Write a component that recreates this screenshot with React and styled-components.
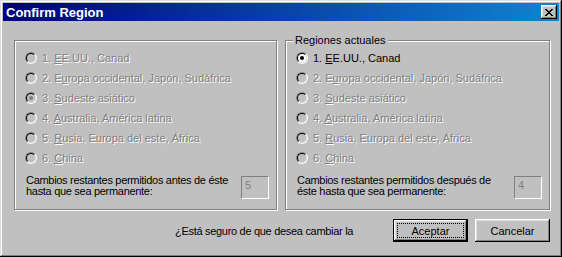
import styled, { createGlobalStyle } from "styled-components";

const regions = [
  { key: "E", pre: "1. ", rest: "E.UU., Canad" },
  { key: "u", pre: "2. E", rest: "ropa occidental, Japón, Sudáfrica" },
  { key: "S", pre: "3. ", rest: "udeste asiático" },
  { key: "A", pre: "4. ", rest: "ustralia, América latina" },
  { key: "R", pre: "5. ", rest: "usia, Europa del este, África" },
  { key: "C", pre: "6. ", rest: "hina" },
];

export default function App() {
  return (
    <>
      <Global />
      <Window>
        <TitleBar>
          <Title>Confirm Region</Title>
          <CloseButton>
            <svg width="8" height="7" viewBox="0 0 8 7">
              <path d="M0 0h2v1h1v1h2V1h1V0h2v1H7v1H6v1H5v1h1v1h1v1h1v1H6V6H5V5H3v1H2v1H0V6h1V5h1V4h1V3H2V2H1V1H0z" fill="#000" />
            </svg>
          </CloseButton>
        </TitleBar>
        <Body>
          <Groups>
            <Group $width={263}>
              <RadioList>
                {regions.map((r, i) => (
                  <RadioRow key={i}>
                    <RadioMark $checked={i === 2} $disabled />
                    <Label $disabled>
                      {r.pre}<u>{r.key}</u>{r.rest}
                    </Label>
                  </RadioRow>
                ))}
              </RadioList>
              <CountRow>
                <CountText>
                  Cambios restantes permitidos antes de éste
                  <br />
                  hasta que sea permanente:
                </CountText>
                <Edit>5</Edit>
              </CountRow>
            </Group>
            <Group $width={265}>
              <Legend>Regiones actuales</Legend>
              <RadioList>
                {regions.map((r, i) => (
                  <RadioRow key={i}>
                    <RadioMark $checked={i === 0} $disabled={i !== 0} />
                    <Label $disabled={i !== 0}>
                      {r.pre}<u>{r.key}</u>{r.rest}
                    </Label>
                  </RadioRow>
                ))}
              </RadioList>
              <CountRow>
                <CountText>
                  Cambios restantes permitidos después de
                  <br />
                  éste hasta que sea permanente:
                </CountText>
                <Edit>4</Edit>
              </CountRow>
            </Group>
          </Groups>
          <Footer>
            <Question>¿Está seguro de que desea cambiar la</Question>
            <Buttons>
              <Button $default>Aceptar</Button>
              <Button>Cancelar</Button>
            </Buttons>
          </Footer>
        </Body>
      </Window>
    </>
  );
}

const Global = createGlobalStyle`
  body {
    margin: 0;
    background: #c0c0c0;
    font-family: "Liberation Sans", Arial, sans-serif;
    font-size: 11px;
  }
`;

const Window = styled.div`
  width: 562px;
  height: 257px;
  box-sizing: border-box;
  padding: 3px;
  background: #c0c0c0;
  box-shadow: inset -1px -1px #000, inset 1px 1px #dfdfdf,
    inset -2px -2px #808080, inset 2px 2px #fff;
  display: flex;
  flex-direction: column;
`;

const TitleBar = styled.div`
  height: 18px;
  display: flex;
  align-items: center;
  justify-content: space-between;
  padding: 0 2px 0 3px;
  background: linear-gradient(to right, #000080, #1084d0);
`;

const Title = styled.span`
  color: #fff;
  font-weight: bold;
  font-size: 13px;
`;

const CloseButton = styled.div`
  width: 16px;
  height: 14px;
  box-sizing: border-box;
  display: flex;
  align-items: center;
  justify-content: center;
  background: #c0c0c0;
  box-shadow: inset -1px -1px #000, inset 1px 1px #fff,
    inset -2px -2px #808080, inset 2px 2px #dfdfdf;
`;

const Body = styled.div`
  flex: 1;
  padding: 19px 9px 0 11px;
  display: flex;
  flex-direction: column;
`;

const Groups = styled.div`
  display: flex;
  gap: 8px;
`;

const Group = styled.div`
  position: relative;
  width: ${(p) => p.$width}px;
  height: 170px;
  box-sizing: border-box;
  border: 1px solid #808080;
  box-shadow: inset 1px 1px #fff, 1px 1px #fff;
  padding: 7px 7px 0 11px;
  display: flex;
  flex-direction: column;
`;

const Legend = styled.span`
  position: absolute;
  top: -7px;
  left: 7px;
  padding: 0 2px;
  background: #c0c0c0;
  line-height: 13px;
`;

const RadioList = styled.div`
  display: flex;
  flex-direction: column;
`;

const RadioRow = styled.div`
  height: 20px;
  display: flex;
  align-items: center;
  gap: 5px;
  margin-left: -1px;
`;

const RadioMark = styled.span`
  position: relative;
  flex: 0 0 12px;
  width: 12px;
  height: 12px;
  box-sizing: border-box;
  border-radius: 50%;
  border: 1px solid;
  border-color: #808080 #fff #fff #808080;

  &::before {
    content: "";
    position: absolute;
    inset: 0;
    border-radius: 50%;
    border: 1px solid;
    border-color: #000 #dfdfdf #dfdfdf #000;
    background: ${(p) => (p.$disabled ? "#c0c0c0" : "#fff")};
  }

  &::after {
    content: "";
    display: ${(p) => (p.$checked ? "block" : "none")};
    position: absolute;
    left: 3px;
    top: 3px;
    width: 4px;
    height: 4px;
    border-radius: 50%;
    background: ${(p) => (p.$disabled ? "#808080" : "#000")};
  }
`;

const Label = styled.span`
  color: ${(p) => (p.$disabled ? "#808080" : "#000")};
  text-shadow: ${(p) => (p.$disabled ? "1px 1px 0 #fff" : "none")};
  white-space: nowrap;
`;

const CountRow = styled.div`
  display: flex;
  align-items: flex-start;
  margin-top: 7px;
`;

const CountText = styled.div`
  line-height: 11px;
  letter-spacing: -0.3px;
  white-space: nowrap;
`;

const Edit = styled.div`
  margin-left: auto;
  margin-top: 1px;
  width: 28px;
  height: 23px;
  box-sizing: border-box;
  padding: 2px 3px;
  color: #808080;
  border: 1px solid;
  border-color: #808080 #fff #fff #808080;
`;

const Footer = styled.div`
  display: flex;
  align-items: center;
  margin-top: 9px;
  padding-left: 161px;
`;

const Question = styled.span`
  letter-spacing: -0.3px;
  white-space: nowrap;
`;

const Buttons = styled.div`
  margin-left: auto;
  display: flex;
  gap: 7px;
`;

const Button = styled.div`
  position: relative;
  width: 75px;
  height: 23px;
  box-sizing: border-box;
  display: flex;
  align-items: center;
  justify-content: center;
  background: #c0c0c0;
  border: ${(p) => (p.$default ? "1px solid #000" : "none")};
  box-shadow: inset -1px -1px #000, inset 1px 1px #fff,
    inset -2px -2px #808080, inset 2px 2px #dfdfdf;

  &::after {
    content: "";
    display: ${(p) => (p.$default ? "block" : "none")};
    position: absolute;
    inset: 3px;
    border: 1px dotted #000;
  }
`;
